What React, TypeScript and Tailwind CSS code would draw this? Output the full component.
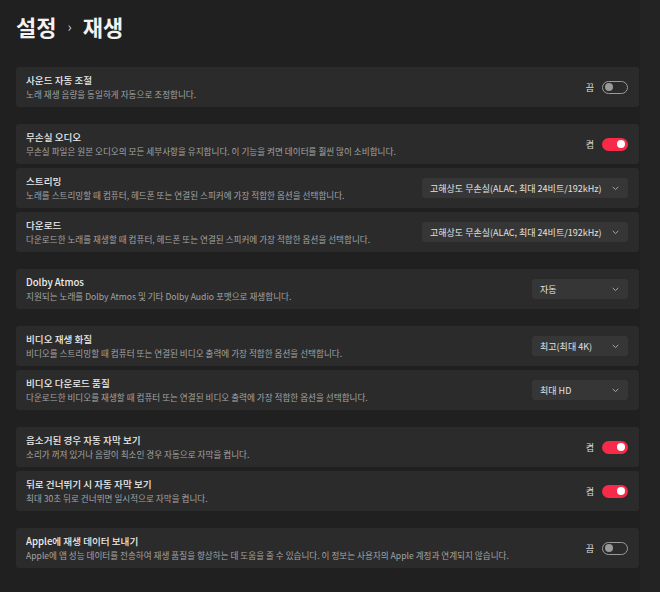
import React from "react";

const FONT = { fontFamily: '"Noto Sans CJK KR", "Noto Sans", sans-serif' };

function Toggle({ on }: { on: boolean }) {
  return (
    <div className="flex items-center gap-[8px]">
      <span className="text-[9px] text-[#dcdcdc] leading-none">{on ? "켬" : "끔"}</span>
      {on ? (
        <div className="w-[26px] h-[13px] rounded-full bg-[#f72a49] flex items-center justify-end pr-[3px]">
          <div className="w-[8px] h-[8px] rounded-full bg-white" />
        </div>
      ) : (
        <div className="w-[26px] h-[13px] rounded-full border border-[#9a9a9a] flex items-center pl-[2px]">
          <div className="w-[8px] h-[8px] rounded-full bg-[#9a9a9a]" />
        </div>
      )}
    </div>
  );
}

function Chevron() {
  return (
    <svg width="7" height="5" viewBox="0 0 7 5" fill="none">
      <path d="M1 1.2 L3.5 3.6 L6 1.2" stroke="#a8a8a8" strokeWidth="1" strokeLinecap="round" strokeLinejoin="round" />
    </svg>
  );
}

function Select({ value, wide }: { value: string; wide?: boolean }) {
  return (
    <div
      className={`${wide ? "w-[206px]" : "w-[96px]"} h-[20px] rounded-[3px] bg-[#363636] flex items-center justify-between pl-[8px] pr-[9px]`}
    >
      <span className="text-[9px] text-[#e2e2e2] leading-none whitespace-nowrap">{value}</span>
      <Chevron />
    </div>
  );
}

function Row({ title, desc, right }: { title: string; desc: string; right: React.ReactNode }) {
  return (
    <div className="h-[40px] rounded-[3px] bg-[#2b2b2b] flex items-center justify-between pl-[10px] pr-[11px]">
      <div className="flex flex-col gap-[3px]">
        <div className="text-[9.6px] font-medium text-[#ececec] leading-[11px] whitespace-nowrap">{title}</div>
        <div className="text-[8.6px] text-[#a3a3a3] leading-[10px] whitespace-nowrap">{desc}</div>
      </div>
      {right}
    </div>
  );
}

function Group({ children }: { children: React.ReactNode }) {
  return <div className="flex flex-col gap-[4px]">{children}</div>;
}

export default function App() {
  return (
    <div className="w-[660px] h-[592px] bg-[#202020] flex overflow-hidden" style={FONT}>
      <div className="w-[640px] pl-[16px] pr-[1px] pt-[12px]">
        <div className="flex items-center h-[28px] text-[22px] font-bold text-[#f2f2f2] leading-none">
          <span>설정</span>
          <span className="text-[14px] font-normal text-[#d0d0d0] mx-[11px]">›</span>
          <span>재생</span>
        </div>
        <div className="mt-[27px] flex flex-col gap-[17px]">
          <Group>
            <Row title="사운드 자동 조절" desc="노래 재생 음량을 동일하게 자동으로 조정합니다." right={<Toggle on={false} />} />
          </Group>
          <Group>
            <Row
              title="무손실 오디오"
              desc="무손실 파일은 원본 오디오의 모든 세부사항을 유지합니다. 이 기능을 켜면 데이터를 훨씬 많이 소비합니다."
              right={<Toggle on />}
            />
            <Row
              title="스트리밍"
              desc="노래를 스트리밍할 때 컴퓨터, 헤드폰 또는 연결된 스피커에 가장 적합한 옵션을 선택합니다."
              right={<Select wide value="고해상도 무손실(ALAC, 최대 24비트/192kHz)" />}
            />
            <Row
              title="다운로드"
              desc="다운로드한 노래를 재생할 때 컴퓨터, 헤드폰 또는 연결된 스피커에 가장 적합한 옵션을 선택합니다."
              right={<Select wide value="고해상도 무손실(ALAC, 최대 24비트/192kHz)" />}
            />
          </Group>
          <Group>
            <Row
              title="Dolby Atmos"
              desc="지원되는 노래를 Dolby Atmos 및 기타 Dolby Audio 포맷으로 재생합니다."
              right={<Select value="자동" />}
            />
          </Group>
          <Group>
            <Row
              title="비디오 재생 화질"
              desc="비디오를 스트리밍할 때 컴퓨터 또는 연결된 비디오 출력에 가장 적합한 옵션을 선택합니다."
              right={<Select value="최고(최대 4K)" />}
            />
            <Row
              title="비디오 다운로드 품질"
              desc="다운로드한 비디오를 재생할 때 컴퓨터 또는 연결된 비디오 출력에 가장 적합한 옵션을 선택합니다."
              right={<Select value="최대 HD" />}
            />
          </Group>
          <Group>
            <Row
              title="음소거된 경우 자동 자막 보기"
              desc="소리가 꺼져 있거나 음량이 최소인 경우 자동으로 자막을 켭니다."
              right={<Toggle on />}
            />
            <Row
              title="뒤로 건너뛰기 시 자동 자막 보기"
              desc="최대 30초 뒤로 건너뛰면 일시적으로 자막을 켭니다."
              right={<Toggle on />}
            />
          </Group>
          <Group>
            <Row
              title="Apple에 재생 데이터 보내기"
              desc="Apple에 앱 성능 데이터를 전송하여 재생 품질을 향상하는 데 도움을 줄 수 있습니다. 이 정보는 사용자의 Apple 계정과 연계되지 않습니다."
              right={<Toggle on={false} />}
            />
          </Group>
        </div>
      </div>
      <div className="flex-1 bg-[#232323]" />
    </div>
  );
}
